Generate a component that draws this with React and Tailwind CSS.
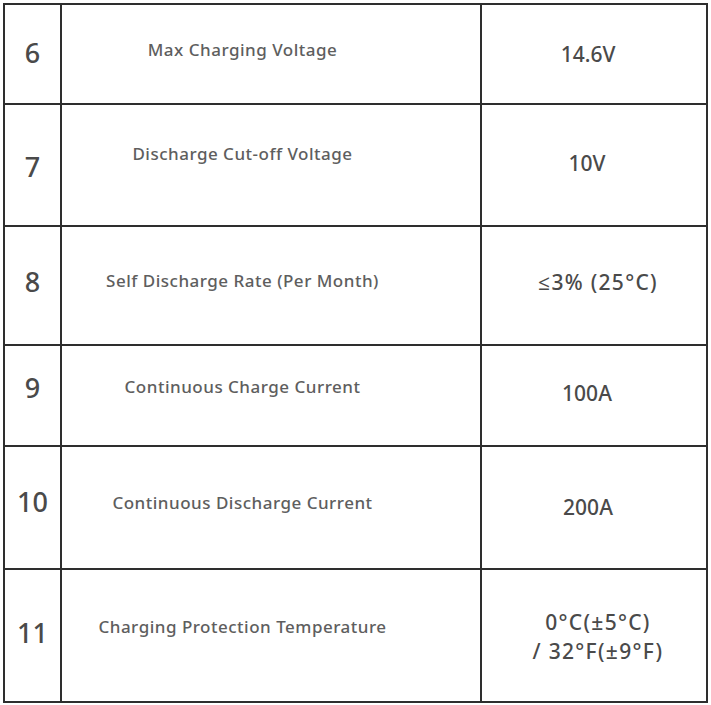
export default function App() {
  const rows = [
    {
      n: "6",
      label: "Max Charging Voltage",
      value: "14.6V",
      row: "h-[100px] border-b-2",
      nc: "pb-[2px]",
      lc: "pb-[8px]",
      vc: "pb-0 pr-[12px]",
    },
    {
      n: "7",
      label: "Discharge Cut-off Voltage",
      value: "10V",
      row: "h-[122px] border-b-2",
      nc: "pt-[4px]",
      lc: "pb-[22px]",
      vc: "pb-[4px] pr-[14px]",
    },
    {
      n: "8",
      label: "Self Discharge Rate (Per Month)",
      value: "≤3% (25°C)",
      row: "h-[119px] border-b-2",
      nc: "pb-[7px]",
      lc: "pb-[9px]",
      vc: "pb-[7px] pl-[8px] tracking-[1.3px]",
    },
    {
      n: "9",
      label: "Continuous Charge Current",
      value: "100A",
      row: "h-[101px] border-b-2",
      nc: "pb-[15px]",
      lc: "pb-[17px]",
      vc: "pb-[5px] pr-[14px]",
    },
    {
      n: "10",
      label: "Continuous Discharge Current",
      value: "200A",
      row: "h-[123px] border-b-2",
      nc: "pb-[11px]",
      lc: "pb-[9px]",
      vc: "pb-0 pr-[12px]",
    },
    {
      n: "11",
      label: "Charging Protection Temperature",
      value: (
        <>
          0°C(±5°C)
          <br />/ 32°F(±9°F)
        </>
      ),
      row: "h-[131px]",
      nc: "pb-[5px]",
      lc: "pb-[17px]",
      vc: "pt-[2px] pl-[8px] tracking-[1.3px]",
    },
  ];

  return (
    <div className="w-[711px] h-[705px] bg-white pt-[3px] pl-[3px] font-['Noto_Sans','Open_Sans',sans-serif]">
      <div className="w-[705px] border-2 border-[#2e2e2e]">
        {rows.map((r) => (
          <div key={r.n} className={"flex border-[#2e2e2e] " + r.row}>
            <div
              className={
                "w-[57px] shrink-0 border-r-2 border-[#2e2e2e] flex items-center justify-center text-[27px] font-medium text-[#4a4a4a] " +
                r.nc
              }
            >
              {r.n}
            </div>
            <div
              className={
                "w-[420px] shrink-0 border-r-2 border-[#2e2e2e] flex items-center justify-center pr-[57px] text-[17px] font-medium tracking-[0.5px] text-[#5e5e5e] " +
                r.lc
              }
            >
              {r.label}
            </div>
            <div
              className={
                "flex-1 flex items-center justify-center text-center text-[21px] leading-[29px] font-medium text-[#4a4a4a] " +
                r.vc
              }
            >
              <div>{r.value}</div>
            </div>
          </div>
        ))}
      </div>
    </div>
  );
}
